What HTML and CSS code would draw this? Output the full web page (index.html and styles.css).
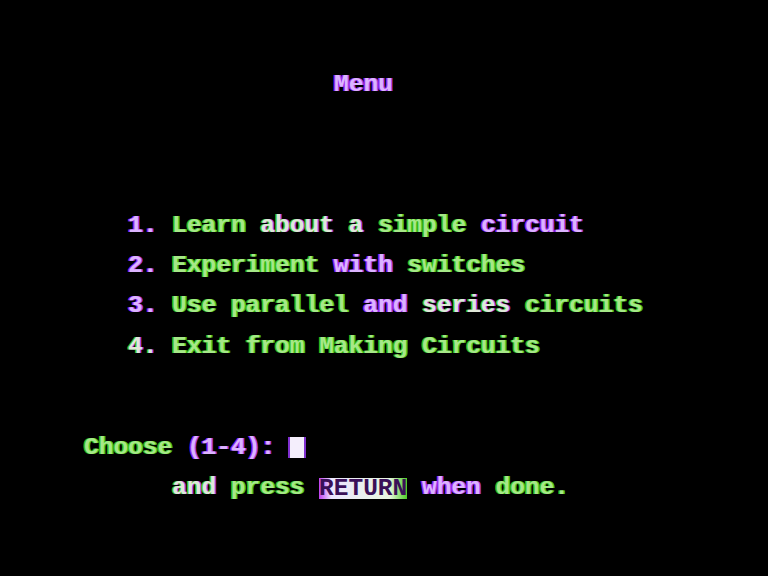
FILE: index.html
```html
<!DOCTYPE html>
<html>
<head>
<meta charset="utf-8">
<link rel="stylesheet" href="styles.css">
</head>
<body>
<div class="screen">
  <div class="line title"><span class="p">Menu</span></div>
  <div class="menu">
    <div class="line"><span class="p">1.</span> <span class="g">Learn</span> <span class="m">about</span> <span class="m">a</span> <span class="g">simple</span> <span class="p">circuit</span></div>
    <div class="line"><span class="p">2.</span> <span class="g">Experiment</span> <span class="p">with</span> <span class="g">switches</span></div>
    <div class="line"><span class="p">3.</span> <span class="g">Use</span> <span class="g">parallel</span> <span class="p">and</span> <span class="m">series</span> <span class="g">circuits</span></div>
    <div class="line"><span class="m">4.</span> <span class="g">Exit</span> <span class="g">from</span> <span class="g">Making</span> <span class="g">Circuits</span></div>
  </div>
  <div class="prompt">
    <div class="line"><span class="g">Choose</span> <span class="p">(1-4):</span> <span class="cursor"></span></div>
    <div class="line indent"><span class="m">and</span> <span class="g">press</span> <span class="inverse">RETURN</span> <span class="p">when</span> <span class="g">done.</span></div>
  </div>
</div>
</body>
</html>
```
FILE: styles.css
```css
html, body {
  margin: 0;
  padding: 0;
  background: #000;
  width: 768px;
  height: 576px;
  overflow: hidden;
}
.screen {
  padding: 75px 0 0 84px;
  font-family: "Liberation Mono", "DejaVu Sans Mono", monospace;
  font-weight: bold;
  font-size: 24.5px;
  color: #eef4ea;
  display: flex;
  flex-direction: column;
}
.line {
  height: 20.1px;
  line-height: 20.1px;
  white-space: pre;
}
.title {
  padding-left: 250px;
}
.menu {
  margin-top: 120.6px;
  padding-left: 44px;
  display: flex;
  flex-direction: column;
  gap: 20.2px;
}
.prompt {
  margin-top: 80.4px;
  display: flex;
  flex-direction: column;
  gap: 20.6px;
}
.indent {
  padding-left: 88px;
}
.g {
  color: #a6e888;
  text-shadow: -1.5px 0 #34b818, 1.5px 0 #48c420;
}
.p {
  color: #dcb4ff;
  text-shadow: -1.5px 0 #9a28ec, 1.5px 0 #a840f0;
}
.m {
  color: #e0e8d8;
  text-shadow: -1.5px 0 #40c020, 1.5px 0 #a040f0;
}
.cursor {
  display: inline-block;
  width: 14px;
  height: 21px;
  vertical-align: -4px;
  background: #f4eefc;
  box-shadow: -2px 0 #8030d0, 2px 0 #8030d0;
}
.inverse {
  display: inline-block;
  height: 21px;
  line-height: 21px;
  vertical-align: -1px;
  color: #3a1058;
  background: linear-gradient(to right, #c040f0 0%, #ece6ff 14%, #e8f6e0 80%, #50cc28 100%);
}
```
